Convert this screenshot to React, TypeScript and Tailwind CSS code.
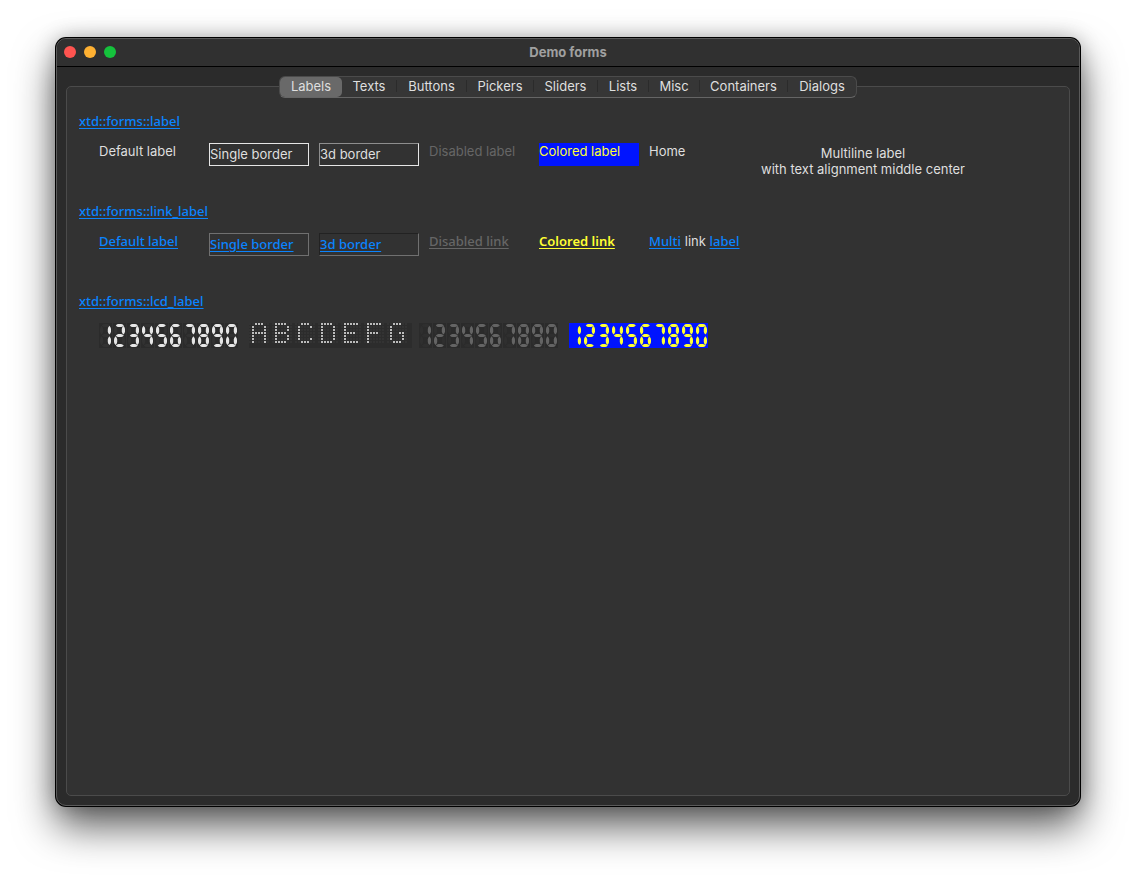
import { useState } from "react";
import type { ReactNode } from "react";

const tabs = [
  { name: "Labels", width: "w-[62px]" },
  { name: "Texts", width: "w-[55px]" },
  { name: "Buttons", width: "w-[70px]" },
  { name: "Pickers", width: "w-[67px]" },
  { name: "Sliders", width: "w-[64px]" },
  { name: "Lists", width: "w-[51px]" },
  { name: "Misc", width: "w-[51px]" },
  { name: "Containers", width: "w-[88px]" },
  { name: "Dialogs", width: "w-[68px]" },
];

// Seven-segment display, segments a to g.
const segmentShapes: Record<string, string> = {
  a: "M2.8 2.4 Q4 1 5.4 1 H8 Q9.4 1 10.8 2.4 Q9.4 4 8 4 H5.4 Q4 4 2.8 2.4 Z",
  b: "M10.4 2.8 Q12 4.6 12 6 V8.6 Q12 10 10.4 11.6 Q8.8 10 8.8 8.6 V6 Q8.8 4.6 10.4 2.8 Z",
  c: "M10.4 13.2 Q12 15 12 16.4 V19 Q12 20.4 10.4 22 Q8.8 20.4 8.8 19 V16.4 Q8.8 15 10.4 13.2 Z",
  d: "M2.8 22.5 Q4 21 5.4 21 H8 Q9.4 21 10.8 22.5 Q9.4 24 8 24 H5.4 Q4 24 2.8 22.5 Z",
  e: "M2.6 13.2 Q4.2 15 4.2 16.4 V19 Q4.2 20.4 2.6 22 Q1 20.4 1 19 V16.4 Q1 15 2.6 13.2 Z",
  f: "M2.6 2.8 Q4.2 4.6 4.2 6 V8.6 Q4.2 10 2.6 11.6 Q1 10 1 8.6 V6 Q1 4.6 2.6 2.8 Z",
  g: "M2.8 12.5 Q4 11 5.4 11 H8 Q9.4 11 10.8 12.5 Q9.4 14 8 14 H5.4 Q4 14 2.8 12.5 Z",
};

const digitSegments: Record<string, string> = {
  "0": "abcdef",
  "1": "bc",
  "2": "abdeg",
  "3": "abcdg",
  "4": "bcfg",
  "5": "acdfg",
  "6": "acdefg",
  "7": "abc",
  "8": "abcdefg",
  "9": "abcdfg",
};

function SegmentDisplay({ value, on, off, back, gap }: { value: string; on: string; off: string; back: string; gap: string }) {
  const width = value.length * 14;
  return (
    <svg width={width} height="25" role="img" aria-label={value} className="shrink-0">
      <rect width={width - 1} height="25" fill={gap} />
      {value.split("").map((digit, i) => (
        <g key={i} transform={`translate(${i * 14} 0)`}>
          <rect width="13" height="25" fill={back} />
          {Object.keys(segmentShapes).map((s) => (
            <path key={s} d={segmentShapes[s]} fill={digitSegments[digit].includes(s) ? on : off} />
          ))}
        </g>
      ))}
    </svg>
  );
}

// Dot-matrix display, five lit columns inside a seven by seven grid.
const dotLetters: Record<string, string[]> = {
  A: [".###.", "#...#", "#...#", "#####", "#...#", "#...#", "#...#"],
  B: ["####.", "#...#", "#...#", "####.", "#...#", "#...#", "####."],
  C: [".###.", "#...#", "#....", "#....", "#....", "#...#", ".###."],
  D: ["####.", "#...#", "#...#", "#...#", "#...#", "#...#", "####."],
  E: ["#####", "#....", "#....", "####.", "#....", "#....", "#####"],
  F: ["#####", "#....", "#....", "####.", "#....", "#....", "#...."],
  G: [".###.", "#....", "#....", "#..##", "#...#", "#...#", ".###."],
};

function DotDisplay({ value }: { value: string }) {
  return (
    <svg width="163" height="25" role="img" aria-label={value} className="shrink-0">
      <rect width="163" height="25" fill="#2c2c2c" />
      {value.split("").map((letter, i) =>
        dotLetters[letter].map((row, y) =>
          `.${row}.`.split("").map((dot, x) => (
            <rect
              key={`${i}-${x}-${y}`}
              x={i * 23 + x * 3}
              y={y * 3}
              width="2"
              height="2"
              fill={dot === "#" ? "#bcbcbc" : "#333333"}
            />
          )),
        ),
      )}
    </svg>
  );
}

function Section({ title, children }: { title: string; children: ReactNode }) {
  return (
    <section className="h-[90px]">
      <h2 className="ml-3 h-[30px]">
        <Link>{title}</Link>
      </h2>
      {children}
    </section>
  );
}

function Link({ children, color = "font-medium text-[#0a84ff]" }: { children: ReactNode; color?: string }) {
  return (
    <a href="#" className={`font-['Noto_Sans',sans-serif] underline underline-offset-2 ${color}`}>
      {children}
    </a>
  );
}

export default function App() {
  const [selected, setSelected] = useState("Labels");
  return (
    <div className="flex min-h-screen flex-col bg-white px-14 pt-[38px] pb-[74px] font-[Inter,sans-serif] text-[13px] leading-4 text-[#dfdfdf]">
      <main className="flex flex-1 flex-col overflow-hidden rounded-[10px] border border-[#5a5a5a] bg-[#2b2b2b] shadow-[0_0_0_1px_#000,0_20px_40px_rgba(0,0,0,0.65),0_0_20px_rgba(0,0,0,0.25)]">
        <header className="flex h-7 items-center border-b border-black bg-[#303030] px-[7px] pb-0.5">
          <div className="flex flex-1 gap-2">
            <button aria-label="Close" className="size-3 rounded-full bg-[#ff5450]" />
            <button aria-label="Minimize" className="size-3 rounded-full bg-[#ffb132]" />
            <button aria-label="Zoom" className="size-3 rounded-full bg-[#15c23c]" />
          </div>
          <h1 className="font-bold text-[#a0a0a0]">Demo forms</h1>
          <div className="flex-1" />
        </header>

        <div className="flex flex-1 flex-col p-[9px]">
          <div role="tablist" className="z-10 flex h-[22px] self-center rounded-md border border-[#4b4b4b] border-b-[#656565] bg-[#363636]">
            {tabs.map((tab, i) => (
              <button
                key={tab.name}
                role="tab"
                aria-selected={selected === tab.name}
                onClick={() => setSelected(tab.name)}
                className={`flex items-center justify-center pb-0.5 ${tab.width} ${
                  selected === tab.name ? "rounded-[5px] bg-[#696969]" : ""
                }`}
              >
                <span className="flex-1">{tab.name}</span>
                {i > 0 && i < tabs.length - 1 && <span className="h-3 w-px bg-[#2b2b2b]" />}
              </button>
            ))}
          </div>

          <div role="tabpanel" className="-mt-3 flex-1 rounded-[5px] border border-[#4b4b4b] bg-[#323232] pt-[26px]">
            <Section title="xtd::forms::label">
              <div className="ml-8 flex gap-[10px]">
                <span className="w-[100px]">Default label</span>
                <span className="flex h-[23px] w-[100px] items-center border border-[#e6e6e6] pb-px">Single border</span>
                <span className="flex h-[23px] w-[100px] items-center border border-[#e6e6e6] border-t-[#8e8e8e] border-l-[#8e8e8e] pb-px">
                  3d border
                </span>
                <span className="w-[100px] text-[#666666]">Disabled label</span>
                <span className="h-[23px] w-[100px] bg-[#0014ff] text-[#ffff33]">Colored label</span>
                <span className="w-[100px]">Home</span>
                <p className="w-52 pt-0.5 text-center">
                  Multiline label
                  <br />
                  with text alignment middle center
                </p>
              </div>
            </Section>

            <Section title="xtd::forms::link_label">
              <div className="ml-8 flex gap-[10px]">
                <span className="w-[100px]"><Link>Default label</Link></span>
                <span className="flex h-[23px] w-[100px] items-center border border-[#707070] pb-px"><Link>Single border</Link></span>
                <span className="flex h-[23px] w-[100px] items-center border border-[#707070] border-t-[#222222] border-l-[#222222] pb-px">
                  <Link>3d border</Link>
                </span>
                <span className="w-[100px]"><Link color="font-medium text-[#666666]">Disabled link</Link></span>
                <span className="w-[100px]"><Link color="font-semibold text-[#ffff33]">Colored link</Link></span>
                <span><Link>Multi</Link> link <Link>label</Link></span>
              </div>
            </Section>

            <Section title="xtd::forms::lcd_label">
              <div className="ml-8 flex gap-[10px]">
                <SegmentDisplay value="1234567890" on="#e6e6e6" off="#323232" back="#2b2b2b" gap="#323232" />
                <span className="flex w-40"><DotDisplay value="ABCDEFG" /></span>
                <SegmentDisplay value="1234567890" on="#646464" off="#2f2f2f" back="#2b2b2b" gap="#323232" />
                <SegmentDisplay value="1234567890" on="#ffff33" off="#0014ff" back="#0014ff" gap="#0014ff" />
              </div>
            </Section>
          </div>
        </div>
      </main>
    </div>
  );
}
